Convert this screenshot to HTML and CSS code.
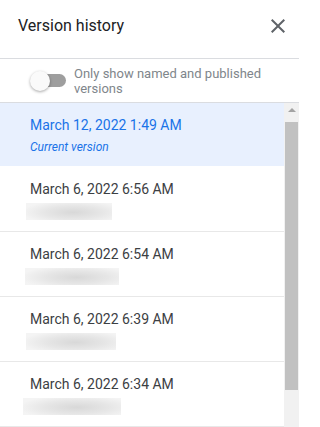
FILE: index.html
```html
<!DOCTYPE html>
<html lang="en">
<head>
<meta charset="utf-8">
<title>Version history</title>
<link rel="stylesheet" href="styles.css">
</head>
<body>
<div class="panel">
  <header class="header">
    <h1 class="title">Version history</h1>
    <button class="close" aria-label="Close">
      <svg width="24" height="24" viewBox="0 0 24 24"><path d="M19 6.41L17.59 5 12 10.59 6.41 5 5 6.41 10.59 12 5 17.59 6.41 19 12 13.41 17.59 19 19 17.59 13.41 12z" fill="#5f6368"/></svg>
    </button>
  </header>
  <div class="filter">
    <div class="switch"><span class="track"></span><span class="knob"></span></div>
    <div class="filter-label">Only show named and published versions</div>
  </div>
  <div class="body">
    <ul class="list">
      <li class="item selected">
        <div class="date">March 12, 2022 1:49 AM</div>
        <div class="current">Current version</div>
      </li>
      <li class="item">
        <div class="date">March 6, 2022 6:56 AM</div>
        <div class="blur" style="width:86px;margin-left:-4px"></div>
      </li>
      <li class="item">
        <div class="date">March 6, 2022 6:54 AM</div>
        <div class="blur" style="width:94px;margin-left:-5px"></div>
      </li>
      <li class="item">
        <div class="date">March 6, 2022 6:39 AM</div>
        <div class="blur" style="width:90px;margin-left:-4px"></div>
      </li>
      <li class="item">
        <div class="date">March 6, 2022 6:34 AM</div>
        <div class="blur" style="width:98px;margin-left:-7px"></div>
      </li>
    </ul>
    <div class="scrollbar">
      <div class="arrow"></div>
      <div class="thumb"></div>
    </div>
  </div>
</div>
</body>
</html>
```
FILE: styles.css
```css
html, body {
  margin: 0;
  padding: 0;
  background: #fff;
  overflow: hidden;
}
body {
  font-family: Roboto, "Liberation Sans", Arial, sans-serif;
  width: 299px;
  height: 427px;
}
.panel {
  width: 299px;
  height: 427px;
  display: flex;
  flex-direction: column;
}
.header {
  height: 58px;
  box-sizing: content-box;
  border-bottom: 1px solid #dadce0;
  display: flex;
  align-items: center;
  justify-content: space-between;
  padding: 0 9px 6px 18px;
  box-sizing: border-box;
  height: 59px;
}
.title {
  margin: 0;
  font-size: 16px;
  font-weight: 400;
  line-height: 20px;
  color: #202124;
}
.close {
  border: 0;
  background: none;
  padding: 0;
  width: 24px;
  height: 24px;
  display: block;
}
.close svg { display: block; }
.filter {
  height: 43px;
  border-bottom: 1px solid #dadce0;
  display: flex;
  align-items: center;
  padding-left: 30px;
}
.switch {
  position: relative;
  width: 36px;
  height: 20px;
  flex: none;
  margin-right: 8px;
}
.track {
  position: absolute;
  left: 3px;
  top: 3px;
  width: 33px;
  height: 13px;
  border-radius: 7px;
  background: #9e9e9e;
}
.knob {
  position: absolute;
  left: 0;
  top: 0;
  width: 20px;
  height: 20px;
  border-radius: 50%;
  background: #fafafa;
  box-shadow: 0 1px 3px rgba(0,0,0,.35);
}
.filter-label {
  font-size: 13px;
  line-height: 15px;
  color: #80868b;
  width: 200px;
  margin-top: 1px;
}
.body {
  flex: 1;
  display: flex;
  min-height: 0;
}
.list {
  list-style: none;
  margin: 0;
  padding: 0;
  flex: 1;
}
.item {
  height: 64px;
  box-sizing: content-box;
  border-bottom: 1px solid #e8e8e8;
  padding: 12px 0 0 30px;
  box-sizing: border-box;
  height: 65px;
}
.item.selected {
  background: #e8f0fe;
  border-bottom-color: #fff;
  height: 64px;
}
.date {
  font-size: 14px;
  line-height: 20px;
  color: #3c4043;
}
.selected .date { color: #1a73e8; }
.current {
  font-size: 12px;
  line-height: 16px;
  font-style: italic;
  color: #1a73e8;
  margin-top: 4px;
}
.blur {
  height: 17px;
  margin-top: 4px;
  background: radial-gradient(ellipse 60% 70% at 55% 55%, #d8d8d8 0%, #e6e6e6 55%, #f4f4f4 100%);
}
.scrollbar {
  width: 15px;
  flex: none;
  background: #f1f1f1;
  position: relative;
}
.arrow {
  width: 0;
  height: 0;
  margin: 5px auto 0;
  border-left: 4px solid transparent;
  border-right: 4px solid transparent;
  border-bottom: 4px solid #a3a3a3;
}
.thumb {
  margin: 10px 0 0 1px;
  width: 13px;
  height: 268px;
  background: #c1c1c1;
}
```
